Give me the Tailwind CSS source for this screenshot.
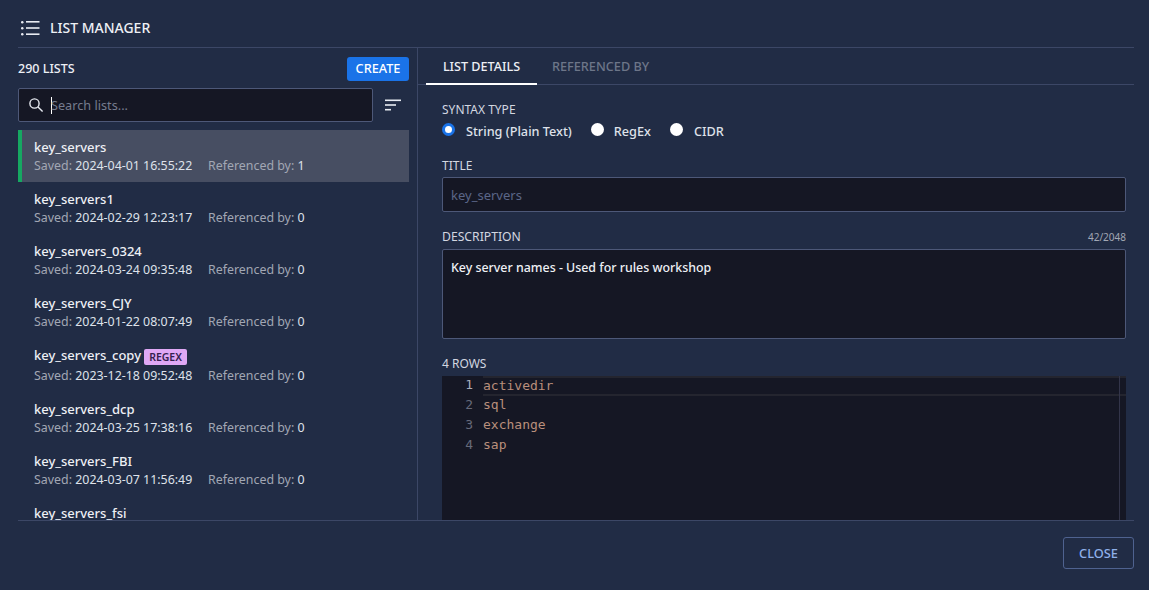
<!DOCTYPE html>
<html lang="en">
  <head>
    <meta charset="UTF-8" />
    <title>List Manager</title>
    <script src="https://cdn.jsdelivr.net/npm/@tailwindcss/browser@4"></script>
  </head>
  <body class="bg-[#212c45] font-['Noto_Sans',sans-serif] text-white overflow-hidden">
    <div class="h-[590px] w-[1149px] flex flex-col px-[15px]">
      <!-- header -->
      <div class="h-[48px] pt-[8px] ml-[3px] flex items-center gap-[10px] border-b border-[#3c4766]">
        <svg width="19" height="16" viewBox="0 0 19 16" class="ml-[3px] shrink-0" fill="#e8ebf2">
          <rect x="0" y="1" width="2.5" height="2.5" rx="1.2" />
          <rect x="0" y="7" width="2.5" height="2.5" rx="1.2" />
          <rect x="0" y="13" width="2.5" height="2.5" rx="1.2" />
          <rect x="5" y="1" width="13.5" height="1.6" />
          <rect x="5" y="7.2" width="13.5" height="1.6" />
          <rect x="5" y="13.4" width="13.5" height="1.6" />
        </svg>
        <span class="text-[14px] font-medium text-[#eef0f5]">LIST MANAGER</span>
      </div>

      <div class="h-[473px] ml-[3px] flex border-b border-[#3c4766]">
        <!-- left column -->
        <div class="w-[400px] shrink-0 border-r border-[#3c4766] pr-[8px] overflow-hidden">
          <div class="h-[40px] flex items-center justify-between">
            <span class="mt-[2px] text-[12.5px] font-medium text-[#eef0f5]">290 LISTS</span>
            <button class="w-[62px] h-[24px] mt-[1px] rounded-[3px] bg-[#1a73e8] text-[12.7px] font-medium text-white">CREATE</button>
          </div>
          <div class="flex items-center mb-[8px]">
            <div class="w-[355px] h-[34px] bg-[#151724] border border-[#4d5878] rounded-[2px] flex items-center pl-[9px]">
              <svg width="16" height="16" viewBox="0 0 16 16" fill="none" stroke="#e8ebf2" stroke-width="1.4" class="shrink-0">
                <circle cx="6.5" cy="6.5" r="4.6" />
                <path d="M10 10l4.6 4.6" />
              </svg>
              <span class="ml-[7px] w-px h-[17px] bg-white"></span>
              <span class="mt-[1px] text-[12.7px] text-[#767c8e] -ml-px">Search lists...</span>
            </div>
            <svg width="16" height="12" viewBox="0 0 16 12" fill="#e8ebf2" class="ml-[12px]">
              <rect x="0" y="0.5" width="16" height="1.6" />
              <rect x="0" y="5.2" width="11" height="1.6" />
              <rect x="0" y="9.9" width="6" height="1.6" />
            </svg>
          </div>
          <div class="flex flex-col">
            <div class="h-[52px] bg-[#474e62] border-l-4 border-[#16a862] pl-[12px] pt-[8px]">
              <div class="text-[13px] leading-[18px] font-medium text-[#eef0f5]">key_servers</div>
              <div class="mt-[1px] text-[12.4px] leading-[18px] flex text-[#a2a7b4]"><span class="w-[174px]">Saved: <span class="text-[#dfe2ea]">2024-04-01 16:55:22</span></span><span>Referenced by: <span class="text-[#dfe2ea]">1</span></span></div>
            </div>
            <div class="h-[52px] pl-[16px] pt-[8px]">
              <div class="text-[13px] leading-[18px] font-medium text-[#eef0f5]">key_servers1</div>
              <div class="mt-[1px] text-[12.4px] leading-[18px] flex text-[#a2a7b4]"><span class="w-[174px]">Saved: <span class="text-[#dfe2ea]">2024-02-29 12:23:17</span></span><span>Referenced by: <span class="text-[#dfe2ea]">0</span></span></div>
            </div>
            <div class="h-[52px] pl-[16px] pt-[8px]">
              <div class="text-[13px] leading-[18px] font-medium text-[#eef0f5]">key_servers_0324</div>
              <div class="mt-[1px] text-[12.4px] leading-[18px] flex text-[#a2a7b4]"><span class="w-[174px]">Saved: <span class="text-[#dfe2ea]">2024-03-24 09:35:48</span></span><span>Referenced by: <span class="text-[#dfe2ea]">0</span></span></div>
            </div>
            <div class="h-[52px] pl-[16px] pt-[8px]">
              <div class="text-[13px] leading-[18px] font-medium text-[#eef0f5]">key_servers_CJY</div>
              <div class="mt-[1px] text-[12.4px] leading-[18px] flex text-[#a2a7b4]"><span class="w-[174px]">Saved: <span class="text-[#dfe2ea]">2024-01-22 08:07:49</span></span><span>Referenced by: <span class="text-[#dfe2ea]">0</span></span></div>
            </div>
            <div class="h-[54px] pl-[16px] pt-[9px]">
              <div class="h-[20px] flex items-center gap-[3px]">
                <span class="-mt-[2px] text-[13px] font-medium text-[#eef0f5]">key_servers_copy</span>
                <span class="h-[16px] w-[43px] text-center rounded-[2px] bg-[#dfa8f5] text-[10.5px] leading-[16px] font-semibold text-[#33204f]">REGEX</span>
              </div>
              <div class="text-[12.4px] leading-[18px] flex text-[#a2a7b4]"><span class="w-[174px]">Saved: <span class="text-[#dfe2ea]">2023-12-18 09:52:48</span></span><span>Referenced by: <span class="text-[#dfe2ea]">0</span></span></div>
            </div>
            <div class="h-[52px] pl-[16px] pt-[8px]">
              <div class="text-[13px] leading-[18px] font-medium text-[#eef0f5]">key_servers_dcp</div>
              <div class="mt-[1px] text-[12.4px] leading-[18px] flex text-[#a2a7b4]"><span class="w-[174px]">Saved: <span class="text-[#dfe2ea]">2024-03-25 17:38:16</span></span><span>Referenced by: <span class="text-[#dfe2ea]">0</span></span></div>
            </div>
            <div class="h-[52px] pl-[16px] pt-[8px]">
              <div class="text-[13px] leading-[18px] font-medium text-[#eef0f5]">key_servers_FBI</div>
              <div class="mt-[1px] text-[12.4px] leading-[18px] flex text-[#a2a7b4]"><span class="w-[174px]">Saved: <span class="text-[#dfe2ea]">2024-03-07 11:56:49</span></span><span>Referenced by: <span class="text-[#dfe2ea]">0</span></span></div>
            </div>
            <div class="h-[30px] pl-[16px] pt-[8px]">
              <div class="text-[13px] leading-[18px] font-medium text-[#eef0f5]">key_servers_fsi</div>
            </div>
          </div>
        </div>

        <!-- right column -->
        <div class="flex-1 min-w-0">
          <div class="h-[37px] flex pl-[8px] border-b border-[#3c4766]">
            <div class="w-[111px] h-[37px] border-b-2 border-white text-center text-[12.6px] leading-[37px] font-medium text-[#eef0f5]">LIST DETAILS</div>
            <div class="ml-[15px] text-[12.7px] leading-[37px] font-medium text-[#6d7689]">REFERENCED BY</div>
          </div>
          <div class="pl-[24px] pr-[8px]">
            <div class="mt-[16px] text-[12px] leading-[18px] text-[#d3d7e0]">SYNTAX TYPE</div>
            <div class="h-[22px] mt-[2px] flex items-center text-[12.7px] font-medium text-[#dfe2ea]">
              <span class="w-[13px] h-[13px] -mt-[5px] rounded-full bg-white border-[3px] border-[#1a73e8] shrink-0"></span>
              <span class="ml-[11px]">String (Plain Text)</span>
              <span class="ml-[19px] w-[13px] h-[13px] -mt-[5px] rounded-full bg-white shrink-0"></span>
              <span class="ml-[10px]">RegEx</span>
              <span class="ml-[19px] w-[13px] h-[13px] -mt-[5px] rounded-full bg-white shrink-0"></span>
              <span class="ml-[11px]">CIDR</span>
            </div>
            <div class="mt-[14px] text-[12px] leading-[18px] text-[#d3d7e0]">TITLE</div>
            <div class="mt-[2px] h-[35px] bg-[#151724] border border-[#4d5878] rounded-[2px] pl-[8px] text-[13px] leading-[35px] text-[#5b6688]">key_servers</div>
            <div class="mt-[16px] flex justify-between items-center h-[18px]">
              <span class="text-[12.2px] text-[#d3d7e0]">DESCRIPTION</span>
              <span class="text-[10px] text-[#a2a7b4]">42/2048</span>
            </div>
            <div class="mt-[3px] h-[90px] bg-[#151724] border border-[#4d5878] rounded-[2px] px-[8px] pt-[9px] text-[12.4px] leading-[18px] font-medium text-[#eef0f5]">Key server names - Used for rules workshop</div>
            <div class="mt-[16px] text-[12px] leading-[18px] text-[#d3d7e0]">4 ROWS</div>
            <div class="relative mt-[3px] h-[144px] bg-[#151724] flex overflow-hidden font-['DejaVu_Sans_Mono',monospace] text-[13px] leading-[20px]">
              <div class="w-[41px] shrink-0 pr-[10px] -mt-px text-right text-[#666a7a]">
                <div class="text-[#a9acb8]">1</div>
                <div>2</div>
                <div>3</div>
                <div>4</div>
              </div>
              <div class="flex-1 text-[#b98f7c] -mt-px">
                <div class="border-y-2 border-[#24252f] h-[20px] leading-[16px] -mr-px mt-px -mb-px">activedir</div>
                <div>sql</div>
                <div>exchange</div>
                <div>sap</div>
              </div>
              <div class="absolute top-0 bottom-0 right-[6px] w-px bg-[#33354a]"></div>
            </div>
          </div>
        </div>
      </div>

      <!-- footer -->
      <div class="flex justify-end mt-[16px]">
        <button class="w-[71px] h-[32px] pt-[1px] rounded-[3px] border border-[#4f628f] text-[12.8px] font-medium text-[#8fb0ea]">CLOSE</button>
      </div>
    </div>
  </body>
</html>
